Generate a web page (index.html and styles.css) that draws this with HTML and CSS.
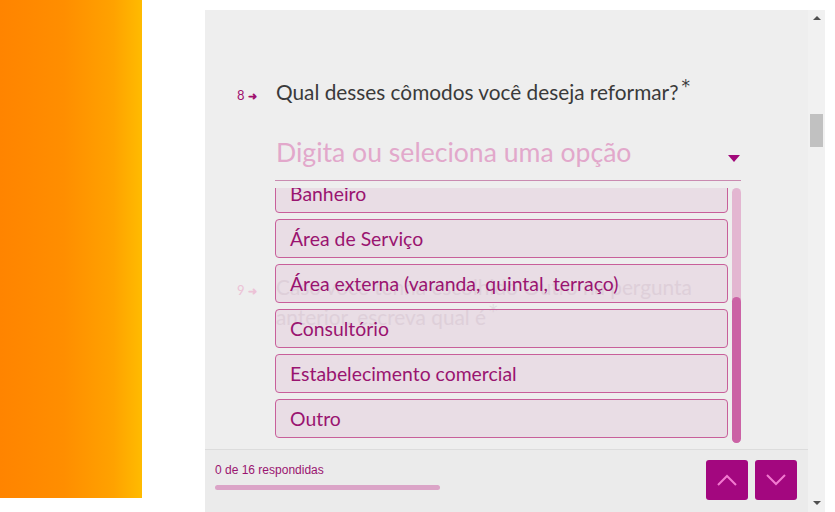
FILE: index.html
```html
<!DOCTYPE html>
<html lang="pt">
<head>
<meta charset="utf-8">
<title>Formulário</title>
<link rel="stylesheet" href="styles.css">
</head>
<body>
<div class="side"></div>
<div class="frame">
  <div class="content">
    <div class="main">
      <div class="question q8">
        <div class="qnum">8 <span class="arrow">&#10140;</span></div>
        <div class="qtext">Qual desses cômodos você deseja reformar?<sup class="req">*</sup></div>
      </div>
      <div class="select">
        <span class="placeholder">Digita ou seleciona uma opção</span>
        <span class="caret"></span>
      </div>
      <div class="question q9">
        <div class="qnum">9 <span class="arrow">&#10140;</span></div>
        <div class="qtext">Caso você tenha escolhido Outro na pergunta<br>anterior, escreva qual é<sup class="req">*</sup></div>
      </div>
      <div class="listbox">
        <div class="options">
          <div class="option">Banheiro</div>
          <div class="option">Área de Serviço</div>
          <div class="option">Área externa (varanda, quintal, terraço)</div>
          <div class="option">Consultório</div>
          <div class="option">Estabelecimento comercial</div>
          <div class="option">Outro</div>
        </div>
        <div class="listscroll"><div class="listthumb"></div></div>
      </div>
    </div>
    <div class="footer">
      <div class="progress">
        <div class="progress-label">0 de 16 respondidas</div>
        <div class="progress-bar"></div>
      </div>
      <div class="navs">
        <button class="nav" aria-label="Anterior"><svg width="20" height="12" viewBox="0 0 20 12"><path d="M1 11 L10 2 L19 11" fill="none" stroke="#f27ad0" stroke-width="2"/></svg></button>
        <button class="nav" aria-label="Próxima"><svg width="20" height="12" viewBox="0 0 20 12"><path d="M1 1 L10 10 L19 1" fill="none" stroke="#f27ad0" stroke-width="2"/></svg></button>
      </div>
    </div>
  </div>
  <div class="scrollbar">
    <span class="sb-up"></span>
    <div class="sb-track"><div class="sb-thumb"></div></div>
    <span class="sb-down"></span>
  </div>
</div>
</body>
</html>
```
FILE: styles.css
```css
html, body {
  margin: 0;
  background: #ffffff;
}
body {
  display: flex;
  align-items: flex-start;
  font-family: "Lato", "Liberation Sans", sans-serif;
}
.side {
  width: 142px;
  height: 498px;
  background: linear-gradient(90deg, #ff8400 0%, #ff8e00 45%, #ffa200 80%, #ffbb00 100%);
  flex: none;
}
.frame {
  margin-left: 63px;
  margin-top: 10px;
  width: 620px;
  height: 502px;
  display: flex;
  flex: none;
}
.content {
  width: 603px;
  display: flex;
  flex-direction: column;
  background: #eeeeee;
}
.main {
  flex: 1;
  position: relative;
  overflow: hidden;
}
.question {
  display: flex;
  align-items: baseline;
  padding-left: 32px;
}
.qnum {
  width: 39px;
  flex: none;
  font-size: 13px;
  color: #a0106e;
}
.arrow {
  font-size: 11px;
  font-weight: 700;
}
.qtext {
  font-size: 20.8px;
  line-height: 30px;
  color: #3a3a3a;
}
.req {
  font-family: "DejaVu Sans", sans-serif;
  font-size: 17px;
  font-weight: 400;
  vertical-align: 8px;
  line-height: 0;
  margin-left: 3px;
}
.q8 {
  margin-top: 67px;
}
.select {
  margin-left: 70px;
  width: 466px;
  height: 52px;
  margin-top: 22px;
  border-bottom: 1px solid #c98bb0;
  display: flex;
  align-items: center;
  justify-content: space-between;
  box-sizing: border-box;
  padding-bottom: 6px;
}
.placeholder {
  font-size: 26.6px;
  color: #e2a8cb;
  padding-left: 1px;
}
.caret {
  width: 0;
  height: 0;
  border-left: 6px solid transparent;
  border-right: 6px solid transparent;
  border-top: 7px solid #a1087a;
  margin-right: 1px;
  margin-top: 14px;
}
.q9 {
  margin-top: 91px;
}
.q9 .qnum {
  color: #ecc2d6;
}
.q9 .qtext {
  color: #e0dcdf;
}
.listbox {
  position: absolute;
  left: 70px;
  top: 178px;
  width: 466px;
  height: 255px;
  display: flex;
  justify-content: space-between;
  overflow: hidden;
}
.options {
  width: 453px;
  margin-top: -14px;
  display: flex;
  flex-direction: column;
  gap: 6px;
}
.option {
  height: 39px;
  box-sizing: border-box;
  border: 1px solid #c85f9a;
  border-radius: 4px;
  background: rgba(216, 168, 202, 0.24);
  color: #9a1470;
  font-size: 19.4px;
  padding-left: 14px;
  display: flex;
  align-items: center;
}
.listscroll {
  width: 9px;
  height: 100%;
  background: #e3b6d1;
  border-radius: 5px;
  display: flex;
  align-items: flex-end;
}
.listthumb {
  width: 9px;
  height: 146px;
  background: #cb62a5;
  border-radius: 5px;
}
.footer {
  height: 63px;
  box-sizing: border-box;
  border-top: 1px solid #dcdcdc;
  background: #ebebeb;
  display: flex;
  justify-content: space-between;
  padding: 0 11px 0 10px;
}
.progress {
  padding-top: 13px;
}
.progress-label {
  font-family: "Liberation Sans", Arial, sans-serif;
  font-size: 12px;
  color: #9a1470;
  line-height: 14px;
}
.progress-bar {
  margin-top: 8px;
  width: 225px;
  height: 5px;
  border-radius: 3px;
  background: #dba4c7;
}
.navs {
  display: flex;
  gap: 7px;
  padding-top: 10px;
}
.nav {
  width: 42px;
  height: 40px;
  border: none;
  border-radius: 3px;
  background: #a3077f;
  display: flex;
  align-items: center;
  justify-content: center;
  padding: 0;
}
.scrollbar {
  width: 17px;
  background: #f1f1f1;
  display: flex;
  flex-direction: column;
  align-items: center;
}
.sb-up, .sb-down {
  width: 0;
  height: 0;
  border-left: 4px solid transparent;
  border-right: 4px solid transparent;
  flex: none;
}
.sb-up {
  border-bottom: 4px solid #505050;
  margin-top: 6px;
}
.sb-down {
  border-top: 4px solid #505050;
  margin-bottom: 7px;
}
.sb-track {
  flex: 1;
  width: 100%;
  padding-top: 94px;
  box-sizing: border-box;
}
.sb-thumb {
  margin: 0 2px;
  height: 33px;
  background: #c1c1c1;
}
```
